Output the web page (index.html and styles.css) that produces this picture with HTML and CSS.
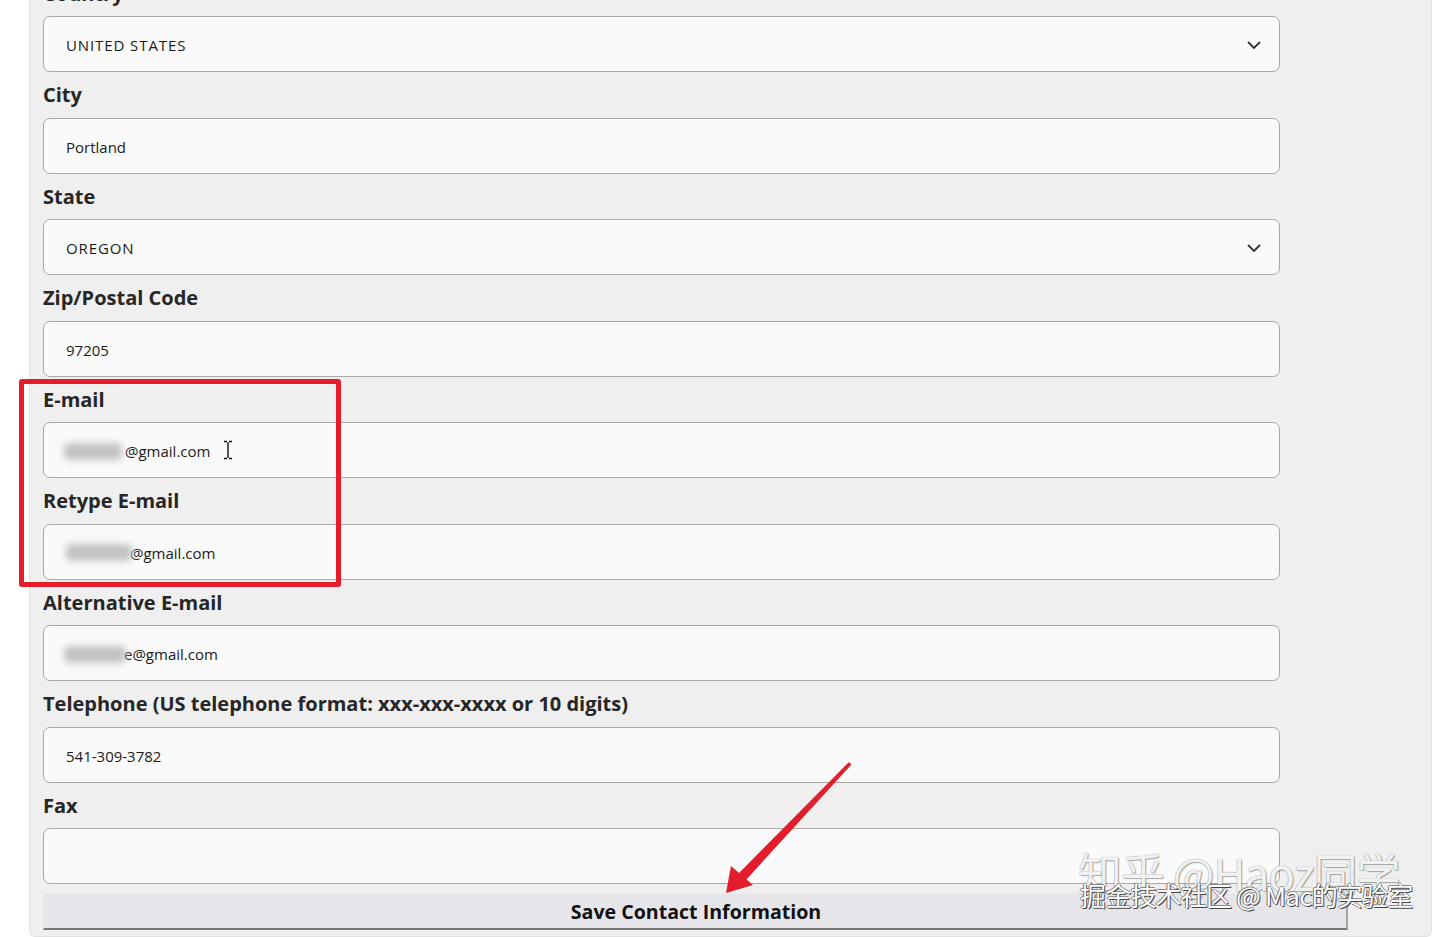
FILE: index.html
```html
<!DOCTYPE html>
<html lang="en">
<head>
<meta charset="utf-8">
<title>Contact Information</title>
<link rel="stylesheet" href="styles.css">
</head>
<body>
<div class="page">
  <div class="panel">
    <form class="form">
      <div class="lbl">Country</div>
      <div class="field select"><span class="val caps">UNITED STATES</span><svg class="chev" width="14" height="8" viewBox="0 0 14 8"><polyline points="1,1 7,7 13,1" fill="none" stroke="#333" stroke-width="1.8"/></svg></div>
      <div class="lbl">City</div>
      <div class="field"><span class="val">Portland</span></div>
      <div class="lbl">State</div>
      <div class="field select"><span class="val caps">OREGON</span><svg class="chev" width="14" height="8" viewBox="0 0 14 8"><polyline points="1,1 7,7 13,1" fill="none" stroke="#333" stroke-width="1.8"/></svg></div>
      <div class="lbl">Zip/Postal Code</div>
      <div class="field"><span class="val">97205</span></div>
      <div class="lbl">E-mail</div>
      <div class="field"><span class="val"><span class="blur b1"></span>@gmail.com</span><svg class="ibeam" width="12" height="20" viewBox="0 0 12 20"><path d="M2 1.5h3M7 1.5h3M6 2v16M2 18.5h3M7 18.5h3" fill="none" stroke="#111" stroke-width="1.4"/></svg></div>
      <div class="lbl">Retype E-mail</div>
      <div class="field"><span class="val"><span class="blur b2"></span>@gmail.com</span></div>
      <div class="lbl">Alternative E-mail</div>
      <div class="field"><span class="val"><span class="blur b3"></span>e@gmail.com</span></div>
      <div class="lbl">Telephone (US telephone format: xxx-xxx-xxxx or 10 digits)</div>
      <div class="field"><span class="val">541-309-3782</span></div>
      <div class="lbl">Fax</div>
      <div class="field"><span class="val"></span></div>
      <button type="button" class="save">Save Contact Information</button>
    </form>
  </div>

  <div class="redbox"></div>
  <svg class="arrow" width="1440" height="937" viewBox="0 0 1440 937">
    <polygon points="849,762 851.5,764.5 744,882 737,875" fill="#e31d2b"/>
    <polygon points="726,893 731,866 753,885" fill="#e31d2b"/>
  </svg>
  <div class="watermark">
    <div class="wm1">知乎 @Haoz同学</div>
    <div class="wm2">掘金技术社区 @ Mac的实验室</div>
  </div>
</div>
</body>
</html>
```

FILE: styles.css
```css
html, body {
  margin: 0;
  padding: 0;
  background: #ffffff;
}

.page {
  position: relative;
  width: 1440px;
  height: 937px;
  overflow: hidden;
  background: #ffffff;
}

.panel {
  margin-top: -29.5px;
  margin-left: 29px;
  width: 1388px;
  padding: 0 0 6px 13px;
  background: #efefef;
  border-left: 1px solid #e2e2e2;
  border-right: 1px solid #e2e2e2;
  border-bottom: 1px solid #e2e2e2;
  border-radius: 0 0 6px 6px;
}

.form {
  display: flex;
  flex-direction: column;
  align-items: flex-start;
}

.lbl {
  font-family: "Open Sans", "Noto Sans", sans-serif;
  font-weight: 700;
  font-size: 20px;
  line-height: 27px;
  color: #262626;
  padding: 9px 0 9.5px;
}

.field {
  box-sizing: border-box;
  width: 1237px;
  height: 56px;
  background: #fafafa;
  border: 1px solid #a8a8a8;
  border-radius: 7px;
  display: flex;
  align-items: center;
  padding: 2px 18px 0 22px;
  font-family: "Open Sans", "Liberation Sans", sans-serif;
  font-size: 15px;
  color: #1a1a1a;
}

.select {
  justify-content: space-between;
}

.val {
  display: inline-flex;
  align-items: center;
  white-space: pre;
}

.caps {
  letter-spacing: 0.9px;
}

.blur {
  display: inline-block;
  height: 17px;
  background: #c2c2c2;
  filter: blur(3.5px);
  border-radius: 5px;
}

.b1 { width: 58px; margin-left: -2px; margin-right: 3px; }
.b2 { width: 66px; margin-right: -2px; position: relative; z-index: 1; }
.b3 { width: 62px; margin-left: -2px; margin-right: -2px; position: relative; z-index: 1; }

.ibeam {
  margin-left: 12px;
  margin-top: -2px;
}

.save {
  box-sizing: border-box;
  margin-top: 9px;
  width: 1305px;
  height: 37px;
  padding: 0 0 0 2px;
  background: #e6e6ea;
  border-top: 1px solid #ececec;
  border-left: 1px solid #ececec;
  border-right: 2px solid #a4a4a4;
  border-bottom: 2px solid #767676;
  font-family: "Open Sans", "Noto Sans", sans-serif;
  font-weight: 700;
  font-size: 19.6px;
  color: #111;
  cursor: pointer;
}

.redbox {
  position: absolute;
  left: 19px;
  top: 379px;
  width: 322px;
  height: 208px;
  box-sizing: border-box;
  border: 5px solid #e31d2b;
  border-radius: 3px;
}

.arrow {
  position: absolute;
  left: 0;
  top: 0;
  pointer-events: none;
}

.watermark {
  position: absolute;
  left: 1078px;
  top: 845px;
  font-family: "Noto Sans CJK SC", "Noto Sans", sans-serif;
  pointer-events: none;
}

.wm1 {
  font-size: 44px;
  line-height: 54px;
  white-space: nowrap;
  color: rgba(255, 255, 255, 0.92);
  text-shadow: 0 0 1px #6e6e6e, 1px 1px 1px rgba(0,0,0,0.3);
  letter-spacing: -1px;
}

.wm2 {
  position: absolute;
  left: 2px;
  top: 33px;
  white-space: nowrap;
  font-size: 26px;
  line-height: 34px;
  color: #ffffff;
  text-shadow: 1px 1px 0 #444, -1px 0 0 #777, 0 -1px 0 #888;
  letter-spacing: -0.8px;
}
```
